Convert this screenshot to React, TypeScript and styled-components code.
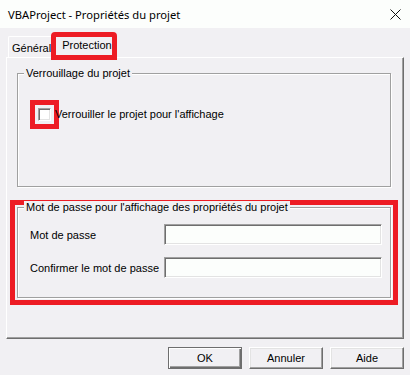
import React from 'react';
import styled, { createGlobalStyle } from 'styled-components';

const GlobalStyle = createGlobalStyle`
  html, body {
    margin: 0;
    padding: 0;
    background: #f1f0f3;
  }
  body {
    font-family: "Liberation Sans", Arial, sans-serif;
    font-size: 11px;
    color: #000;
  }
`;

const RED = '#ed1c24';

const Window = styled.div`
  width: 410px;
  height: 375px;
  background: #f1f0f3;
  display: flex;
  flex-direction: column;
  overflow: hidden;
`;

const TitleBar = styled.div`
  height: 28px;
  background: #fcfefc;
  display: flex;
  align-items: center;
  justify-content: space-between;
  padding: 0 9px 0 8px;
  font-family: "Noto Sans", "Liberation Sans", sans-serif;
  font-size: 11.2px;
`;

const CloseIcon = () => (
  <svg width="11" height="11" viewBox="0 0 11 11">
    <path d="M0.5 0.5 L10.5 10.5 M10.5 0.5 L0.5 10.5" stroke="#111" strokeWidth="1" fill="none" />
  </svg>
);

const Body = styled.div`
  padding: 6px 6px 0 6px;
  display: flex;
  flex-direction: column;
`;

const TabStrip = styled.div`
  height: 23px;
  display: flex;
  align-items: flex-end;
  padding-left: 2px;
  position: relative;
  z-index: 1;
`;

const Tab = styled.div<{ $active?: boolean; $marked?: boolean }>`
  box-sizing: border-box;
  height: ${p => (p.$active ? '24px' : '21px')};
  margin-bottom: ${p => (p.$active ? '-1px' : '0')};
  margin-left: ${p => (p.$active ? '-2px' : '0')};
  width: ${p => (p.$active ? '62px' : 'auto')};
  padding: ${p => (p.$active ? '4px 0 0 8px' : '5px 3px 0 3px')};
  background: #f1f0f3;
  border: 1px solid #fff;
  border-right-color: #a0a0a0;
  border-bottom: none;
  border-radius: 2px 2px 0 0;
  line-height: 13px;
  white-space: nowrap;
  outline: ${p => (p.$marked ? `5px solid ${RED}` : 'none')};
  outline-offset: -3px;
`;

const Panel = styled.div`
  box-sizing: border-box;
  height: 282px;
  border: 1px solid #fff;
  border-right-color: #6e6e6e;
  border-bottom-color: #6e6e6e;
  box-shadow: inset -1px -1px 0 #a0a0a0;
  padding: 15px 12px 0 10px;
  display: flex;
  flex-direction: column;
`;

const Group = styled.div<{ $height: number; $marked?: boolean }>`
  box-sizing: border-box;
  position: relative;
  height: ${p => p.$height}px;
  border: 1px solid #a0a0a0;
  box-shadow: inset 1px 1px 0 #fff, 1px 1px 0 #fff;
  outline: ${p => (p.$marked ? `5px solid ${RED}` : 'none')};
  outline-offset: 2px;
`;

const Caption = styled.span`
  position: absolute;
  top: -7px;
  left: 6px;
  padding: 0 2px;
  line-height: 13px;
  background: #f1f0f3;
  white-space: nowrap;
`;

const LockRow = styled.label`
  display: flex;
  align-items: center;
  gap: 4px;
  padding: 34px 0 0 20px;
  line-height: 13px;
`;

const CheckBox = styled.span`
  box-sizing: border-box;
  width: 13px;
  height: 13px;
  background: #fff;
  border: 1px solid;
  border-color: #a0a0a0 #fff #fff #a0a0a0;
  box-shadow: inset 1px 1px 0 #6e6e6e, inset -1px -1px 0 #e3e3e3;
  outline: 5px solid ${RED};
  outline-offset: 3px;
  flex: none;
`;

const FieldGrid = styled.div`
  display: grid;
  grid-template-columns: 134px 218px;
  grid-auto-rows: 21px;
  row-gap: 12px;
  align-items: center;
  padding: 16px 0 0 12px;
`;

const FieldInput = styled.div`
  box-sizing: border-box;
  height: 21px;
  background: #fcfefc;
  border: 1px solid;
  border-color: #a0a0a0 #fff #fff #a0a0a0;
  box-shadow: inset 1px 1px 0 #6e6e6e, inset -1px -1px 0 #e3e3e3;
`;

const Spacer = styled.div<{ $h: number }>`
  height: ${p => p.$h}px;
  flex: none;
`;

const ButtonRow = styled.div`
  display: flex;
  justify-content: flex-end;
  gap: 7px;
  margin-top: 8px;
`;

const Button = styled.div<{ $default?: boolean }>`
  box-sizing: border-box;
  width: 74px;
  height: 22px;
  display: flex;
  align-items: center;
  justify-content: center;
  background: #f1f0f3;
  border: 1px solid;
  border-color: ${p => (p.$default ? '#6e6e6e' : '#fff #6e6e6e #6e6e6e #fff')};
  box-shadow: ${p =>
    p.$default
      ? 'inset 1px 1px 0 #fff, inset -1px -1px 0 #6e6e6e, inset -2px -2px 0 #a0a0a0'
      : 'inset -1px -1px 0 #a0a0a0, inset 1px 1px 0 #e3e3e3'};
`;

export default function App() {
  return (
    <>
      <GlobalStyle />
      <Window>
        <TitleBar>
          <span>VBAProject - Propriétés du projet</span>
          <CloseIcon />
        </TitleBar>
        <Body>
          <TabStrip>
            <Tab>Général</Tab>
            <Tab $active $marked>Protection</Tab>
          </TabStrip>
          <Panel>
            <Group $height={114}>
              <Caption>Verrouillage du projet</Caption>
              <LockRow>
                <CheckBox />
                <span>Verrouiller le projet pour l'affichage</span>
              </LockRow>
            </Group>
            <Spacer $h={20} />
            <Group $height={91} $marked>
              <Caption>Mot de passe pour l'affichage des propriétés du projet</Caption>
              <FieldGrid>
                <span>Mot de passe</span>
                <FieldInput />
                <span>Confirmer le mot de passe</span>
                <FieldInput />
              </FieldGrid>
            </Group>
          </Panel>
          <ButtonRow>
            <Button $default>OK</Button>
            <Button>Annuler</Button>
            <Button>Aide</Button>
          </ButtonRow>
        </Body>
      </Window>
    </>
  );
}
